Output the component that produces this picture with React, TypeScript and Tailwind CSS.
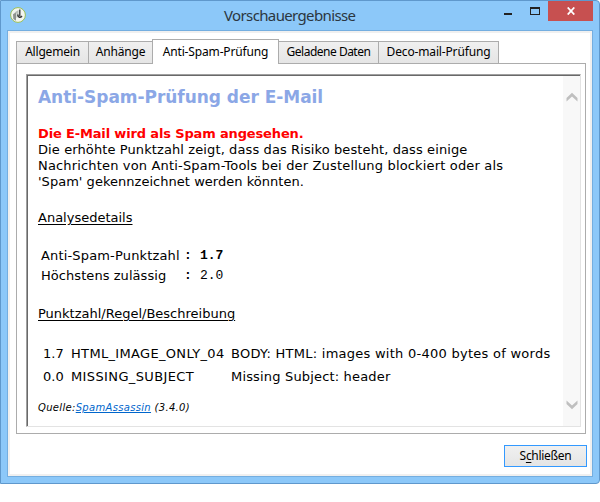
const tabs = [
  { label: 'Allgemein', cls: 'w-[73px] tracking-[-0.2px]' },
  { label: 'Anhänge', cls: 'w-[65px] tracking-[-0.2px]' },
  { label: 'Anti-Spam-Prüfung', cls: 'w-[127px] tracking-[-0.15px]', active: true },
  { label: 'Geladene Daten', cls: 'w-[101px] tracking-[-0.5px]' },
  { label: 'Deco-mail-Prüfung', cls: 'w-[121px] tracking-[-0.15px]' },
];

function TitleBar() {
  return (
    <div className="flex h-[29px] shrink-0 items-start">
      <svg className="ml-[9px] mt-[6px]" width="16" height="16" viewBox="0 0 16 16">
        <circle cx="8" cy="8" r="7.4" fill="#f3f5ef" stroke="#9bbf55" />
        <path d="M3 7.2 6 5.2v8.6L3.3 12z" fill="#8f938f" />
        <path d="M4.5 5.5 8.5 3v6.5L6.5 11V6.5z" fill="#b9beb9" />
        <path d="M9.8 2.5v6.8M7.2 8.2h.8c0 2.3 2.4 2.9 4 .8" fill="none" stroke="#343434" strokeWidth="1.3" />
      </svg>
      <div className="ml-[198px] mt-[2px] w-[132px] whitespace-nowrap text-[15px] leading-6 tracking-[-0.63px] text-[#2b3640]">
        Vorschauergebnisse
      </div>
      <svg className="ml-auto" width="44" height="20" viewBox="0 0 44 20" shapeRendering="crispEdges">
        <path d="M0 12h8v2H0z" fill="#222" />
        <path d="M26 6h10v8H26z" fill="#222" />
        <path d="M27 8h8v5h-8z" fill="#8cc8f9" />
      </svg>
      <div className="mr-[6px] flex h-5 w-[45px] items-center justify-center bg-[#c75050]">
        <svg width="8" height="8" viewBox="0 0 8 8">
          <path d="M.7.5 7.3 7.5M7.3.5.7 7.5" stroke="#fff" strokeWidth="1.8" />
        </svg>
      </div>
    </div>
  );
}

function Tabs() {
  return (
    <div className="relative z-10 -mb-px flex h-[25px] items-end">
      {tabs.map((t, i) => (
        <div
          key={t.label}
          className={`flex shrink-0 items-center justify-center whitespace-nowrap border border-[#acacac] text-[12px] text-black ${t.cls} ${i ? '-ml-px' : ''} ${
            t.active ? 'h-[25px] border-b-0 bg-white pb-px' : 'h-[23px] bg-linear-to-b from-[#f0f0f0] to-[#e5e5e5] pb-px'
          }`}
        >
          {t.label}
        </div>
      ))}
    </div>
  );
}

function ScrollBar() {
  return (
    <div className="flex w-[17px] shrink-0 flex-col items-center justify-between bg-[#f8f8f8] pt-[16px] pb-[16px]">
      <svg width="12" height="10" viewBox="0 0 12 10"><path d="M.5 6v3.4L6 4.4l5.5 5V6L6 .8.5 6z" fill="#bfbfbf" /></svg>
      <svg width="12" height="10" viewBox="0 0 12 10"><path d="M.5.6V4L6 9.2 11.5 4V.6L6 5.6z" fill="#bfbfbf" /></svg>
    </div>
  );
}

function Report() {
  return (
    <div className="grow whitespace-nowrap pl-[10px] font-['DejaVu_Sans',Verdana,sans-serif] text-[13px] leading-4 text-black">
      <h1 className="mt-[11px] text-[17px] font-bold leading-5 tracking-[-0.04px] text-[#8ba7e6]">Anti-Spam-Prüfung der E-Mail</h1>
      <p className="mt-[19px] font-bold tracking-[-0.15px] text-[#f00]">Die E-Mail wird als Spam angesehen.</p>
      <p className="tracking-[0.105px]">Die erhöhte Punktzahl zeigt, dass das Risiko besteht, dass einige</p>
      <p className="tracking-[0.165px]">Nachrichten von Anti-Spam-Tools bei der Zustellung blockiert oder als</p>
      <p className="tracking-[0.03px]">'Spam' gekennzeichnet werden könnten.</p>
      <p className="mt-5 underline underline-offset-2">Analysedetails</p>
      <div className="mt-5 grid grid-cols-[143px_16px_60px] pl-[3px] leading-5">
        <span className="tracking-[0.16px]">Anti-Spam-Punktzahl</span>
        <b className="font-['Liberation_Mono',monospace]">:</b>
        <b className="font-['Liberation_Mono',monospace]">1.7</b>
        <span className="tracking-[0.06px]">Höchstens zulässig</span>
        <b className="font-['Liberation_Mono',monospace]">:</b>
        <span className="font-['Liberation_Mono',monospace]">2.0</span>
      </div>
      <p className="mt-5 underline underline-offset-2">Punktzahl/Regel/Beschreibung</p>
      <div className="mt-5 grid grid-cols-[28px_160px_330px] pl-[5px] leading-[23px]">
        <span>1.7</span>
        <span className="tracking-[0.33px]">HTML_IMAGE_ONLY_04</span>
        <span className="tracking-[0.26px]">BODY: HTML: images with 0-400 bytes of words</span>
        <span>0.0</span>
        <span className="tracking-[0.38px]">MISSING_SUBJECT</span>
        <span className="tracking-[0.17px]">Missing Subject: header</span>
      </div>
      <p className="mt-[12px] text-[10px] italic leading-4 tracking-[0.32px]">
        Quelle:<a className="text-[#0066cc] underline">SpamAssassin</a> (3.4.0)
      </p>
    </div>
  );
}

export default function App() {
  return (
    <div className="h-[502px] w-[600px] overflow-hidden bg-white font-['Noto_Sans','Open_Sans',sans-serif]">
      <div className="flex h-[484px] w-[600px] flex-col rounded-[4px] rounded-l-none border border-[#5f98cc] bg-[#8cc8f9]">
        <TitleBar />
        <div className="mx-[6px] mb-[6px] flex grow flex-col border border-[#74aee0] bg-[#f0f0f0] p-[2px]">
          <div className="flex grow flex-col bg-white pl-[6px] pr-[4px] pt-[6px]">
            <Tabs />
            <div className="h-[371px] border border-[#acacac] py-[10px] pl-[9px] pr-[4px]">
              <div className="flex h-[353px] border border-[#e3e3e3] border-l-[#a0a0a0] border-t-[#a0a0a0]">
                <div className="flex grow border-l border-t border-[#696969]">
                  <Report />
                  <ScrollBar />
                </div>
              </div>
            </div>
            <div className="-mr-px mt-[11px] flex justify-end">
              <button className="flex h-[22px] w-[83px] items-center justify-center border border-[#3399ff] bg-linear-to-b from-[#f0f0f0] to-[#e5e5e5] text-[12px] tracking-[-0.3px] text-black">
                <span>S<span className="underline underline-offset-2">c</span>hließen</span>
              </button>
            </div>
          </div>
        </div>
      </div>
    </div>
  );
}
